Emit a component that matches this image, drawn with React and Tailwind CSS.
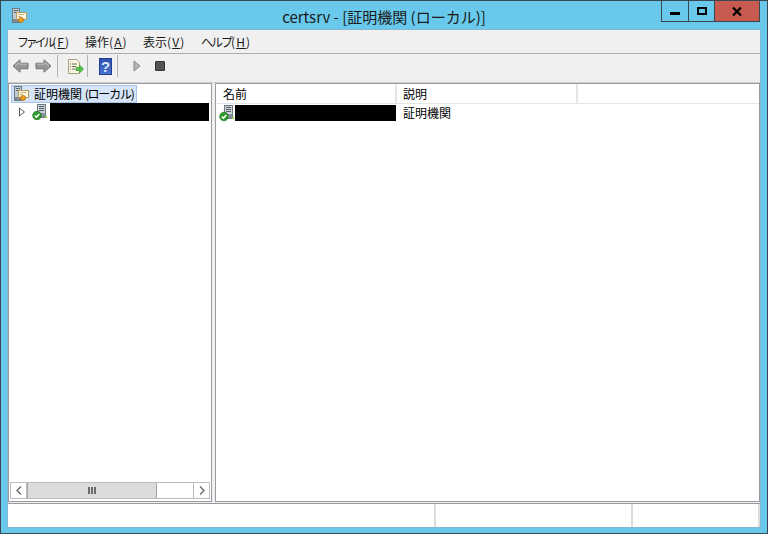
const FONT = "font-['Noto_Sans_CJK_JP','Liberation_Sans',sans-serif]";

// tracking per item, the original UI font has narrower kana and wider brackets
const MENUS = [
  { label: 'ファイル', key: 'F', labelCls: 'tracking-[-3.2px]', w: 'w-[52px]' },
  { label: '操作', key: 'A', labelCls: '', w: 'w-[42px]' },
  { label: '表示', key: 'V', labelCls: '', w: 'w-[42px]' },
  { label: 'ヘルプ', key: 'H', labelCls: 'tracking-[-2px]', w: 'w-[48px]' },
];

function CertIcon() {
  return (
    <svg width="16" height="16" viewBox="0 0 16 16" className="shrink-0">
      <rect x="1.500" y="0.500" width="7" height="14" fill="#c4cbd0" stroke="#6f7a80" />
      <rect x="3" y="2" width="4" height="1" fill="#5a666d" />
      <rect x="3" y="4" width="4" height="1" fill="#5a666d" />
      <rect x="2" y="11" width="6" height="3" fill="#7d8a90" />
      <rect x="5.500" y="4.500" width="10" height="7" fill="#fdf8e2" stroke="#b59a5a" />
      <path d="M7 6.500h6M7 8.500h3" stroke="#cdb57a" strokeWidth="1" />
      <circle cx="10" cy="12" r="2.500" fill="#eaa21f" stroke="#b8690f" strokeWidth="0.800" />
    </svg>
  );
}

function ServerIcon() {
  return (
    <svg width="16" height="16" viewBox="0 0 16 16" className="shrink-0">
      <rect x="5.500" y="0.500" width="8" height="13" fill="#ccd2d6" stroke="#6f7a80" />
      <rect x="7" y="2" width="5" height="1" fill="#56626a" />
      <rect x="7" y="4" width="5" height="1" fill="#56626a" />
      <rect x="7" y="6" width="5" height="1" fill="#56626a" />
      <rect x="6" y="9" width="7" height="4" fill="#87939a" />
      <circle cx="5" cy="11.500" r="4.300" fill="#2f9a2c" stroke="#1d6d1c" strokeWidth="0.700" />
      <path d="M2.800 11.500l1.600 1.700 2.900-3.300" fill="none" stroke="#fff" strokeWidth="1.500" />
      <rect x="13" y="12" width="2" height="2" fill="#8ccf3f" />
    </svg>
  );
}

function BackIcon({ flip }) {
  return (
    <svg width="17" height="14" viewBox="0 0 17 14" className={flip ? '-scale-x-100' : ''}>
      <path d="M1 7L8 .8v3.400h8v5.600H8v3.400z" fill="#969696" stroke="#757575" />
      <path d="M3 7l4-3.400v1.600h8" fill="none" stroke="#c0c0c0" />
    </svg>
  );
}

function ExportIcon() {
  return (
    <svg width="17" height="17" viewBox="0 0 17 17">
      <path d="M1.500 1.500h8l3 3v11h-11z" fill="#faf6e4" stroke="#a89f80" />
      <path d="M3 6h1M5 6h5M3 8.500h1M5 8.500h4M3 11h1M5 11h3" stroke="#6a6a5a" />
      <path d="M9 9.500h3.500V7l4 4-4 4v-2.500H9z" fill="#55c14a" stroke="#389a30" strokeWidth="0.700" />
    </svg>
  );
}

function HelpIcon() {
  return (
    <div className="flex h-[17px] w-[13px] items-center justify-center border border-[#1e3f94] bg-gradient-to-b from-[#2f52ad] to-[#4a72cc]">
      <span className="font-['Liberation_Sans',sans-serif] text-[15px] leading-none font-bold text-[#dfe8fb]">?</span>
    </div>
  );
}

function ToolSep() {
  return <div className="h-[22px] w-px bg-[#b4b4b4]" />;
}

export default function App() {
  return (
    <div className={`${FONT} flex h-[534px] w-[768px] flex-col overflow-hidden border border-[#3c4650] bg-[#69c9ec] text-xs text-black`}>
      {/* title bar */}
      <div className="relative flex h-[29px] shrink-0 items-start justify-center pt-[6px]">
        <div className="absolute top-[7px] left-[10px]">
          <CertIcon />
        </div>
        <span className="text-[15px] leading-[19px] text-[#1a1a1a]">certsrv - [証明機関 (ローカル)]</span>
        <div className="absolute top-0 right-[7px] flex h-[21px] border-x border-b border-[#3c4650]">
          <div className="flex w-[27px] items-center justify-center border-r border-[#3c4650] pt-[5px]">
            <div className="h-[3px] w-[10px] bg-black" />
          </div>
          <div className="flex w-[26px] items-center justify-center border-r border-[#3c4650]">
            <div className="h-[8px] w-[10px] border-2 border-black" />
          </div>
          <div className="flex w-[44px] items-center justify-center bg-[#c75b50]">
            <svg width="10" height="9" viewBox="0 0 10 9">
              <path d="M1 .5l8 8M9 .5l-8 8" stroke="#000" strokeWidth="2.200" />
            </svg>
          </div>
        </div>
      </div>

      {/* window body */}
      <div className="mx-[7px] mb-[6px] flex min-h-0 flex-1 flex-col bg-[#f0f0f0] shadow-[0_0_0_0.5px_#a0a8b0]">
        {/* menu bar */}
        <div className="flex h-[24px] shrink-0 items-center gap-[16px] border-b border-[#aeaeb6] pl-[9px]">
          {MENUS.map(({ label, key, labelCls, w }) => (
            <span key={key} className={`${w} text-xs leading-none whitespace-nowrap text-[#1a1a1a]`}>
              <span className={labelCls}>{label}</span>
              <span className="tracking-[1.100px]">(<span className="underline">{key}</span>)</span>
            </span>
          ))}
        </div>

        {/* toolbar */}
        <div className="flex h-[29px] shrink-0 items-center border-b border-[#d0d0d0] pb-[4px] pl-[4px]">
          <BackIcon />
          <div className="ml-[6px]"><BackIcon flip /></div>
          <div className="ml-[5px]"><ToolSep /></div>
          <div className="ml-[9px]"><ExportIcon /></div>
          <div className="ml-[3px]"><ToolSep /></div>
          <div className="ml-[11px]"><HelpIcon /></div>
          <div className="ml-[5px]"><ToolSep /></div>
          <svg width="8" height="12" viewBox="0 0 8 12" className="ml-[15px]">
            <path d="M1 1l6 5-6 5z" fill="#b5b5b5" stroke="#8a8a8a" />
          </svg>
          <div className="ml-[14px] h-[10px] w-[10px] rounded-[1px] border border-[#333] bg-[#555]" />
        </div>

        {/* panes */}
        <div className="flex min-h-0 flex-1">
          <div className="flex w-[204px] shrink-0 flex-col border border-[#9a9aa2] bg-white">
            <div className="flex-1 pt-[1px] pl-[2px]">
              <div className="flex h-[18px] w-[126px] items-center border border-[#a5c4e8] bg-[#d5e5f7] pl-[1px]">
                <CertIcon />
                <span className="ml-[5px] text-xs leading-none whitespace-nowrap">
                  証明機関 <span className="tracking-[-1.200px]">(ローカル)</span>
                </span>
              </div>
              <div className="flex h-[18px] items-center">
                <svg width="8" height="10" viewBox="0 0 8 10" className="ml-[7px]">
                  <path d="M1.500 1l5 4-5 4z" fill="#fff" stroke="#5a5a5a" />
                </svg>
                <div className="ml-[6px]"><ServerIcon /></div>
                <div className="ml-[2px] h-[18px] w-[159px] bg-black" />
              </div>
            </div>
            {/* scrollbar */}
            <div className="mx-[1px] mb-[2px] flex h-[17px] border border-[#bdbdbd] bg-white">
              <div className="flex w-[16px] items-center justify-center border-r border-[#bdbdbd]">
                <svg width="6" height="9" viewBox="0 0 6 9"><path d="M5 .5L1 4.500l4 4" fill="none" stroke="#6a6a6a" strokeWidth="1.400" /></svg>
              </div>
              <div className="flex w-[130px] items-center justify-center gap-px border-x border-[#a5a5a5] bg-[#dcdcdc]">
                <div className="h-[7px] w-[2px] bg-[#6a6a6a]" />
                <div className="h-[7px] w-[2px] bg-[#6a6a6a]" />
                <div className="h-[7px] w-[2px] bg-[#6a6a6a]" />
              </div>
              <div className="flex-1" />
              <div className="flex w-[16px] items-center justify-center border-l border-[#bdbdbd]">
                <svg width="6" height="9" viewBox="0 0 6 9"><path d="M1 .5l4 4-4 4" fill="none" stroke="#6a6a6a" strokeWidth="1.400" /></svg>
              </div>
            </div>
          </div>

          <div className="w-[3px] shrink-0" />

          <div className="min-w-0 flex-1 border border-[#9a9aa2] bg-white">
            <div className="flex h-[20px] border-b border-[#e5e5e5] bg-white">
              <div className="flex w-[181px] items-center border-r-2 border-[#e5e5e5] pl-[7px]">名前</div>
              <div className="flex w-[181px] items-center border-r-2 border-[#e5e5e5] pl-[6px]">説明</div>
            </div>
            <div className="flex h-[18px] items-center">
              <div className="ml-[3px]"><ServerIcon /></div>
              <div className="h-[16px] w-[161px] bg-black" />
              <span className="ml-[7px]">証明機関</span>
            </div>
          </div>
        </div>

        {/* status bar */}
        <div className="mt-px flex h-[24px] shrink-0 border-t border-[#9a9aa2] bg-white">
          <div className="w-[428px] border-r-2 border-[#dcdcdc]" />
          <div className="w-[197px] border-r-2 border-[#dcdcdc]" />
          <div className="flex-1 border-r-2 border-[#dcdcdc]" />
        </div>
      </div>
    </div>
  );
}
